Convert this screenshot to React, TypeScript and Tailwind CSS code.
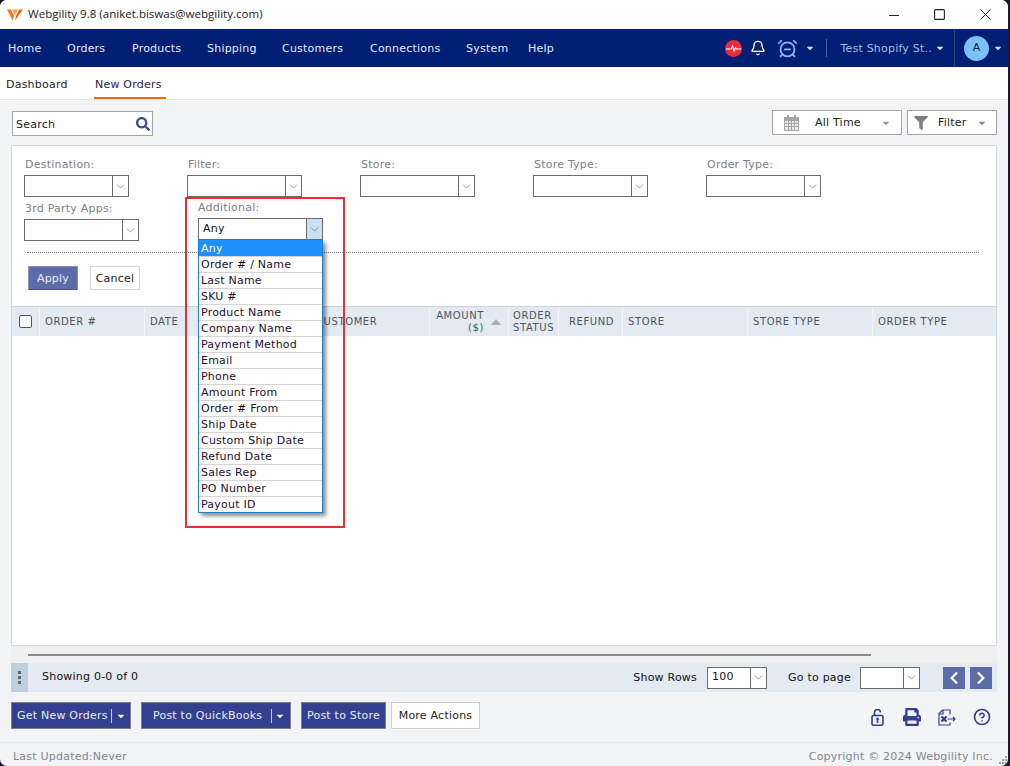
import { Bell, AlarmClockMinus, ChevronDown, CircleHelp } from 'lucide-react';
import { FaSearch, FaFilter, FaPrint, FaChevronLeft, FaChevronRight, FaCaretDown } from 'react-icons/fa';

const navItems = [
  { label: 'Home', cls: 'w-[59px]' },
  { label: 'Orders', cls: 'w-[65px]' },
  { label: 'Products', cls: 'w-[75px]' },
  { label: 'Shipping', cls: 'w-[75px]' },
  { label: 'Customers', cls: 'w-[88px]' },
  { label: 'Connections', cls: 'w-[96px]' },
  { label: 'System', cls: 'w-[62px]' },
  { label: 'Help', cls: 'w-[40px]' },
];

const options = [
  'Any', 'Order # / Name', 'Last Name', 'SKU #', 'Product Name', 'Company Name', 'Payment Method', 'Email', 'Phone',
  'Amount From', 'Order # From', 'Ship Date', 'Custom Ship Date', 'Refund Date', 'Sales Rep', 'PO Number', 'Payout ID',
];

function Select({ w, value, open }: { w: string; value?: string; open?: boolean }) {
  return (
    <div className={`flex h-[22px] items-stretch border border-[#6b6b6b] bg-white ${w}`}>
      <div className={`flex-1 pl-[4px] text-[#111] ${open ? 'leading-[19px]' : 'leading-[18px]'}`}>{value}</div>
      <div className={`flex w-[16px] items-center justify-center border-l border-[#6b6b6b] ${open ? 'bg-[#c9e0f5]' : ''}`}>
        <ChevronDown size={13} strokeWidth={1} className="text-[#444]" />
      </div>
    </div>
  );
}

function Field({ label, w, cls }: { label: string; w: string; cls: string }) {
  return (
    <div className={cls}>
      <div className="h-[19px] pl-[1px] leading-[17px] text-[#7b8087]">{label}</div>
      <Select w={w} />
    </div>
  );
}

function Th({ cls, children }: { cls: string; children: React.ReactNode }) {
  return <div className={`flex items-center border-r border-[#f3f5f8] pl-[5px] ${cls}`}>{children}</div>;
}

function Logo() {
  return (
    <svg width="16" height="12" viewBox="0 0 16 12">
      <path d="M0 0.5 L4 0.5 L7 7 L5.5 11.5 Z" fill="#f47b20" />
      <path d="M5 0.5 L11 0.5 L8 6.5 Z" fill="#f9a03f" />
      <path d="M9 7 L12 0.5 L16 0.5 L8 11.5 Z" fill="#ee6a12" />
    </svg>
  );
}

export default function App() {
  return (
    <div className="h-[766px] w-[1010px] overflow-hidden bg-[#141a33]">
      <div className="flex h-[766px] w-[1008px] flex-col overflow-hidden rounded-[7px] bg-[#f3f4f6] text-[11px] tracking-[0.22px] font-['DejaVu_Sans',sans-serif] text-[#222]">
        {/* title bar */}
        <div className="flex h-[29px] items-center bg-white pl-[7px]">
          <Logo />
          <span className="ml-[5px] pb-[2px] font-['Open_Sans',sans-serif] text-[11.55px] tracking-normal text-[#1a1a1a]">Webgility 9.8 (aniket.biswas@webgility.com)</span>
          <div className="ml-auto flex items-center text-[#222]">
            <svg width="10" height="10" viewBox="0 0 10 10" className="mr-[35px]"><path d="M0 5.5 H10" stroke="#222" strokeWidth="1" /></svg>
            <svg width="11" height="11" viewBox="0 0 11 11" className="mr-[35px]"><rect x="0.6" y="0.6" width="9.8" height="9.8" rx="1" fill="none" stroke="#222" strokeWidth="1.1" /></svg>
            <svg width="11" height="11" viewBox="0 0 11 11" className="mr-[17px]"><path d="M0.5 0.5 L10.5 10.5 M10.5 0.5 L0.5 10.5" stroke="#222" strokeWidth="1" /></svg>
          </div>
        </div>

        {/* nav */}
        <div className="flex h-[38px] items-center bg-[#001e74] pl-[8px] text-[#e4e9f5]">
          {navItems.map((n) => (
            <div key={n.label} className={`pt-[2px] ${n.cls}`}>{n.label}</div>
          ))}
          <div className="ml-auto flex items-center">
            <div className="flex h-[17px] w-[17px] items-center justify-center rounded-full bg-[#ee2a37]">
              <svg width="15" height="9" viewBox="0 0 15 9"><path d="M0 5 H5 L6.5 2 L8 7 L9.5 4 L10.5 5 H15" fill="none" stroke="#fff" strokeWidth="1.2" /></svg>
            </div>
            <Bell size={16} strokeWidth={2} className="ml-[8px] text-white" />
            <AlarmClockMinus size={21} strokeWidth={2} className="ml-[11px] text-[#8fb4f2]" />
            <FaCaretDown size={10} className="ml-[7px] text-[#dfe6f5]" />
            <div className="ml-[11px] h-[18px] w-px bg-[#4a5f96]" />
            <span className="ml-[13px] pt-[2px] text-[#a9bce4]">Test Shopify St..</span>
            <FaCaretDown size={10} className="ml-[3px] text-[#dfe6f5]" />
            <div className="ml-[9px] h-[38px] w-px bg-[#2c437f]" />
            <div className="ml-[9px] flex h-[25px] w-[25px] items-center justify-center rounded-full bg-[#7cc2f7] text-[#0b1a3a]">A</div>
            <FaCaretDown size={10} className="ml-[4px] mr-[5px] text-[#dfe6f5]" />
          </div>
        </div>

        {/* tabs */}
        <div className="flex h-[33px] items-stretch border-b border-[#e3e4e6] bg-white pl-[6px]">
          <div className="w-[88px] pt-[10px]">Dashboard</div>
          <div className="h-[32px] w-[72px] border-b-2 border-[#f26a0f] pl-[1px] pt-[10px] text-[#2c1a4a]">New Orders</div>
        </div>

        {/* search + range */}
        <div className="flex h-[45px] items-start justify-between pl-[12px] pr-[11px] pt-[10px]">
          <div className="mt-[1px] flex h-[25px] w-[141px] items-center justify-between border border-[#a5a5a5] bg-white pl-[3px] pr-[2px]">
            <span className="pt-[3px]">Search</span>
            <FaSearch size={14} className="text-[#3c4a94]" />
          </div>
          <div className="flex">
            <div className="flex h-[25px] w-[130px] items-center border border-[#a5a5a5] bg-white pl-[11px] pr-[10px]">
              <svg width="15" height="16" viewBox="0 0 15 16" className="text-[#a6a6a6]">
                <path d="M3 0h2v3H3zM10 0h2v3h-2z" fill="currentColor" />
                <rect x="0" y="2" width="15" height="14" fill="currentColor" />
                <path d="M1 6h3v2H1zM5 6h2v2H5zM8 6h2v2H8zM11 6h3v2h-3zM1 9h3v2H1zM5 9h2v2H5zM8 9h2v2H8zM11 9h3v2h-3zM1 12h3v3H1zM5 12h2v3H5zM8 12h2v3H8zM11 12h3v3h-3z" fill="#e9e9e9" />
              </svg>
              <span className="ml-[16px] pt-[1px]">All Time</span>
              <FaCaretDown size={10} className="ml-auto text-[#999]" />
            </div>
            <div className="ml-[5px] flex h-[25px] w-[90px] items-center border border-[#a5a5a5] bg-white pl-[6px] pr-[9px]">
              <FaFilter size={14} className="text-[#7d7d7d]" />
              <span className="ml-[10px] pt-[1px]">Filter</span>
              <FaCaretDown size={10} className="ml-auto text-[#888]" />
            </div>
          </div>
        </div>

        {/* main panel */}
        <div className="ml-[11px] flex h-[501px] w-[986px] flex-col border border-[#d5d6d8] bg-white">
          <div className="h-[161px] border-b border-[#d0d2d5] pl-[12px] pt-[10px]">
            <div className="flex">
              <Field label="Destination:" w="w-[105px]" cls="w-[163px]" />
              <Field label="Filter:" w="w-[115px]" cls="w-[173px]" />
              <Field label="Store:" w="w-[115px]" cls="w-[173px]" />
              <Field label="Store Type:" w="w-[115px]" cls="w-[173px]" />
              <Field label="Order Type:" w="w-[115px]" cls="w-[173px]" />
            </div>
            <div className="mt-[3px] flex">
              <Field label="3rd Party Apps:" w="w-[115px]" cls="w-[174px]" />
              <div className="relative">
                {/* highlight box */}
                <div className="pointer-events-none absolute left-[-13px] top-[-3px] z-20 h-[331px] w-[160px] border-2 border-[#ed2d33]" />
                <div className="h-[18px] leading-[15px] text-[#7b8087]">Additional:</div>
                <Select w="w-[125px]" value="Any" open />
                <div className="absolute left-0 top-[40px] z-10 w-[125px] border border-t-0 border-[#1c7fd6] bg-white shadow-[3px_3px_4px_rgba(0,0,0,0.45)]">
                  {options.map((o, i) => (
                    <div
                      key={o}
                      className={`h-[16px] pl-[2px] ${i === 0 ? 'bg-[#1e90ff] leading-[17px] text-white' : 'border-t border-[#d4d4d4] leading-[15px] text-[#1a1030]'}`}
                    >
                      {o}
                    </div>
                  ))}
                </div>
              </div>
            </div>
            <div className="ml-[3px] mr-[17px] mt-[11px] border-t border-dotted border-[#777]" />
            <div className="ml-[4px] mt-[13px] flex">
              <div className="flex h-[24px] w-[50px] items-center justify-center border border-[#8b93b5] border-b-[#4a568f] bg-[#5d6ba8] pt-[2px] text-[#e8ebf5]">Apply</div>
              <div className="ml-[12px] flex h-[24px] w-[50px] items-center justify-center border border-[#d5d5d5] bg-white pt-[2px]">Cancel</div>
            </div>
          </div>

          <div className="flex h-[29px] items-stretch bg-[#e3eaf1] text-[10px] tracking-[0.6px] text-[#4d5663]">
            <Th cls="w-[28px]">
              <div className="ml-[2px] h-[13px] w-[13px] rounded-[2px] border border-[#555] bg-white" />
            </Th>
            <Th cls="w-[105px]">ORDER #</Th>
            <Th cls="w-[168px]">DATE</Th>
            <Th cls="w-[117px]">
              <span className="ml-[-2px]">CUSTOMER</span>
            </Th>
            <Th cls="w-[79px]">
              <div className="ml-auto mr-[7px] flex items-center">
                <div className="text-right leading-[12px]">AMOUNT<br />($)</div>
                <div className="ml-[7px] h-0 w-0 border-x-[5px] border-b-[6px] border-x-transparent border-b-[#aab0b7]" />
              </div>
            </Th>
            <Th cls="w-[50px]"><div className="ml-[-1px] leading-[12px]">ORDER<br />STATUS</div></Th>
            <Th cls="w-[64px]"><span className="pl-[5px]">REFUND</span></Th>
            <Th cls="w-[125px]">STORE</Th>
            <Th cls="w-[125px]">STORE TYPE</Th>
            <div className="flex flex-1 items-center pl-[5px]">ORDER TYPE</div>
          </div>
          <div className="flex-1" />
        </div>

        {/* horizontal scrollbar */}
        <div className="ml-[11px] h-[17px] w-[986px] bg-[#f0f0f0] pl-[17px] pt-[8px]">
          <div className="h-[2px] w-[843px] bg-[#8a8a8a]" />
        </div>

        {/* pager */}
        <div className="ml-[11px] flex h-[29px] w-[986px] items-center bg-[#e3eaf1]">
          <div className="flex h-full w-[17px] flex-col items-center justify-center gap-[2px] bg-[#bcd0e0]">
            <div className="h-[3px] w-[3px] bg-[#666]" />
            <div className="h-[3px] w-[3px] bg-[#666]" />
            <div className="h-[3px] w-[3px] bg-[#666]" />
          </div>
          <span className="ml-[14px] text-[#111]">Showing 0-0 of 0</span>
          <span className="ml-auto pt-[1px] text-[#111]">Show Rows</span>
          <div className="ml-[10px]"><Select w="w-[60px]" value="100" /></div>
          <span className="ml-[21px] pt-[1px] text-[#111]">Go to page</span>
          <div className="ml-[9px]"><Select w="w-[60px]" /></div>
          <div className="ml-[23px] flex h-[22px] w-[22px] items-center justify-center bg-[#5d6ba8] text-white"><FaChevronLeft size={14} /></div>
          <div className="ml-[5px] mr-[5px] flex h-[22px] w-[22px] items-center justify-center bg-[#5d6ba8] text-white"><FaChevronRight size={14} /></div>
        </div>

        {/* actions */}
        <div className="flex h-[50px] items-start pl-[11px] pt-[10px]">
          <div className="flex h-[27px] w-[120px] items-center border border-[#7a7f8c] bg-[#333f8f] pl-[5px] pt-[1px] text-[#e8ebf5]">
            <span>Get New Orders</span>
            <span className="ml-[3px] h-[14px] w-px bg-[#c8cde5]" />
            <FaCaretDown size={10} className="ml-[4px] text-white" />
          </div>
          <div className="ml-[10px] flex h-[27px] w-[150px] items-center border border-[#7a7f8c] bg-[#333f8f] pl-[11px] pt-[1px] text-[#e8ebf5]">
            <span>Post to QuickBooks</span>
            <span className="ml-[9px] h-[14px] w-px bg-[#c8cde5]" />
            <FaCaretDown size={10} className="ml-[3px] text-white" />
          </div>
          <div className="ml-[10px] flex h-[27px] w-[85px] items-center justify-center border border-[#7a7f8c] bg-[#333f8f] pt-[1px] text-[#e8ebf5]">Post to Store</div>
          <div className="ml-[5px] flex h-[27px] w-[89px] items-center justify-center border border-[#cfcfcf] bg-white pt-[1px]">More Actions</div>
          <div className="ml-auto mr-[17px] mt-[6px] flex items-center text-[#333f8f]">
            <svg width="13" height="17" viewBox="0 0 13 17" fill="none" stroke="currentColor" strokeWidth="1.6">
              <rect x="1" y="6.5" width="11" height="9.7" rx="1.5" />
              <path d="M3.5 6.5V3.5a3 3 0 0 1 6 0" />
              <path d="M6.5 14V9.5" />
              <path d="M4.5 10.5L6.5 8.3L8.5 10.5Z" fill="currentColor" stroke="none" />
            </svg>
            <FaPrint size={18} className="ml-[19px]" />
            <svg className="ml-[17px]" width="18" height="17" viewBox="0 0 18 17" fill="none" stroke="currentColor" strokeWidth="1.2">
              <path d="M12 5.5V1H4.5L1 4.5V16H12V13.5" />
              <path d="M1 5h4V1" />
              <path d="M3.5 7.5L8.5 12.5M8.5 7.5L3.5 12.5" strokeWidth="2.2" />
              <path d="M9.5 10h7.5M15 8l2 2-2 2" />
            </svg>
            <CircleHelp size={18} strokeWidth={2.2} className="ml-[17px]" />
          </div>
        </div>

        {/* status bar */}
        <div className="relative flex flex-1 items-center justify-between border-t border-[#e6e7e9] pl-[13px] pr-[15px] pt-[5px] text-[#7f8690]">
          <span>Last Updated:Never</span>
          <span>Copyright © 2024 Webgility Inc.</span>
          <svg width="8" height="8" viewBox="0 0 8 8" className="absolute bottom-[2px] right-[1px] text-[#9a9a9a]">
            <path d="M6 0h2v2H6zM3 3h2v2H3zM6 3h2v2H6zM0 6h2v2H0zM3 6h2v2H3zM6 6h2v2H6z" fill="currentColor" />
          </svg>
        </div>
      </div>
    </div>
  );
}
